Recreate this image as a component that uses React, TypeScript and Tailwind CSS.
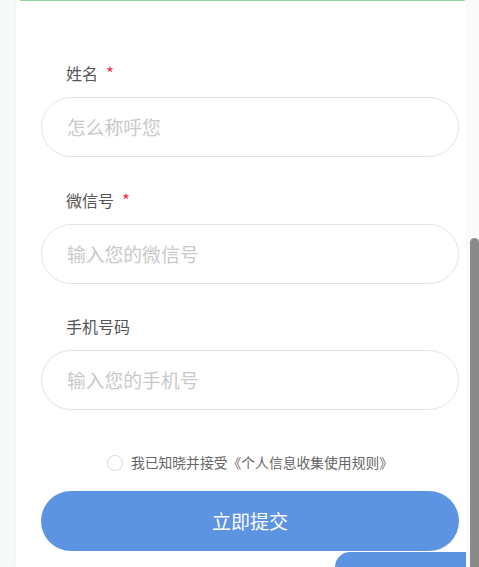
import React from "react";

const fields = [
  { label: "姓名", required: true, placeholder: "怎么称呼您" },
  { label: "微信号", required: true, placeholder: "输入您的微信号" },
  { label: "手机号码", required: false, placeholder: "输入您的手机号" },
];

export default function App() {
  return (
    <div
      className="relative flex h-[567px] w-[479px] overflow-hidden bg-[#f7f8f8]"
      style={{ fontFamily: '"Noto Sans CJK SC", "Noto Sans", sans-serif' }}
    >
      {/* card */}
      <div className="ml-4 flex w-[450px] flex-col bg-white shadow-[0_0_4px_rgba(0,0,0,0.04)]">
        <div className="ml-1 mr-px h-[2px] rounded-b-sm bg-[#8fd1a3]" />

        <form className="flex flex-col pl-[25px] pr-[7px] pt-[60px]">
          {fields.map((f, i) => (
            <div key={f.label} className={i === 1 ? "mt-[31px]" : i === 2 ? "mt-[30px]" : ""}>
              <div className="flex h-6 items-center pl-[25px] text-base text-[#555]">
                {f.label}
                {f.required && <span className="ml-2 text-[17px] text-[#f0364f]">*</span>}
              </div>
              <input
                type="text"
                placeholder={f.placeholder}
                className="mt-3 h-[60px] w-full rounded-full border border-[#e4e4e4] bg-white pl-[25px] pb-px text-[18.8px] text-[#333] outline-none placeholder:text-[#c9c9c9]"
              />
            </div>
          ))}

          {/* agreement */}
          <label className="mt-[43px] flex h-5 items-center justify-center">
            <span className="h-4 w-4 rounded-full border border-[#dcdcdc]" />
            <span className="ml-[8px] text-[13.8px] text-[#666]">
              我已知晓并接受《个人信息收集使用规则》
            </span>
          </label>

          <button
            type="button"
            className="mt-[18px] h-[60px] w-full rounded-full bg-[#5c94e2] text-[19px] text-white"
          >
            立即提交
          </button>
        </form>

        <div className="mt-px ml-auto h-10 w-[131px] rounded-tl-[32px] bg-[#5c94e2]" />
      </div>

      {/* scrollbar */}
      <div className="absolute right-0 top-0 h-full w-[13px] bg-[#fafafa]">
        <div className="absolute bottom-0 right-0 top-[238px] w-[9px] rounded-t-md bg-[#8a8a8a]" />
      </div>
    </div>
  );
}
